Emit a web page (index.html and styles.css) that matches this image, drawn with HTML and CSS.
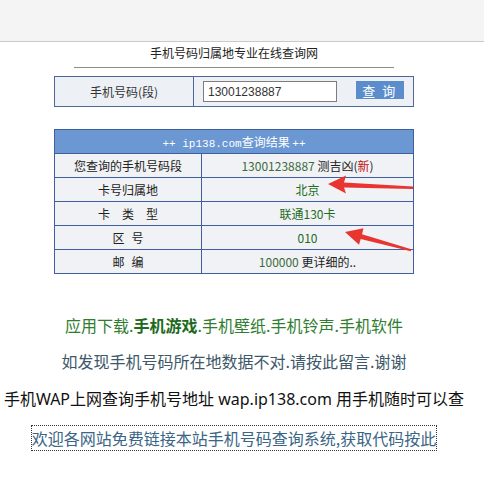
FILE: index.html
```html
<!DOCTYPE html>
<html lang="zh-CN">
<head>
    <meta charset="UTF-8">
    <title>手机号码归属地专业在线查询网</title>
    <link rel="stylesheet" href="styles.css">
</head>
<body>
    <div class="topbar"></div>
    <div class="page">
        <div class="site-title">手机号码归属地专业在线查询网</div>
        <hr class="title-rule">

        <table class="search-table">
            <tr>
                <td class="search-label">手机号码(段)</td>
                <td class="search-field">
                    <input class="search-input" type="text" value="13001238887">
                    <button class="search-btn">查 询</button>
                </td>
            </tr>
        </table>

        <table class="result-table">
            <tr><th colspan="2"><span class="mono">++ ip138.com</span>查询结果 <span class="mono">++</span></th></tr>
            <tr><td class="key">您查询的手机号码段</td><td class="val"><span class="num">13001238887</span> <span class="plain">测吉凶(<em>新</em>)</span></td></tr>
            <tr><td class="key">卡号归属地</td><td class="val">北京</td></tr>
            <tr><td class="key"><span class="wide">卡类型</span></td><td class="val">联通130卡</td></tr>
            <tr><td class="key"><span class="mid">区号</span></td><td class="val">010</td></tr>
            <tr><td class="key"><span class="mid">邮编</span></td><td class="val"><span class="num">100000</span> <span class="plain">更详细的..</span></td></tr>
        </table>

        <p class="links green">应用下载.<b>手机游戏</b>.手机壁纸.手机铃声.手机软件</p>
        <p class="links slate">如发现手机号码所在地数据不对.请按此留言.谢谢</p>
        <p class="links black">手机WAP上网查询手机号地址 wap.ip138.com 用手机随时可以查</p>
        <p class="links"><a class="code-link" href="#">欢迎各网站免费链接本站手机号码查询系统,获取代码按此</a></p>
    </div>

    <svg class="arrows" width="484" height="496" viewBox="0 0 484 496">
        <polygon points="328,184 346,175.5 344,182.5 413,186.5 413,189 344,187.5 346,193.5" fill="#e8352f"/>
        <polygon points="345,232 363.5,228.3 362,234.2 411.3,249.3 410.7,251.3 360.7,238.9 359,244.7" fill="#e8352f"/>
    </svg>
</body>
</html>
```

FILE: styles.css
```css
body {
    margin: 0;
    font-family: "Noto Sans CJK SC", sans-serif;
    background: white;
    position: relative;
    width: 484px;
    height: 496px;
    overflow: hidden;
}
.topbar { height: 41px; background: #f4f4f4; border-bottom: 1px solid #c9c9c9; }
.page { width: 468px; text-align: center; }
.site-title { font-size: 12px; line-height: 16px; margin-top: 3px; color: #222; }
.title-rule { width: 320px; margin: 6px auto 0; border: none; border-top: 1px solid #8c8c8c; height: 0; }

.search-table {
    margin: 8px auto 0; width: 360px; border-collapse: collapse;
    border: 1px solid #4d679d; background: #edf1f6;
}
.search-table td { padding: 0; height: 29px; font-size: 12px; color: #333; }
.search-label { width: 138px; border-right: 1px solid #4d679d; }
.search-field { text-align: left; }
.search-input {
    margin: 0 0 0 9px; width: 134px; height: 21px; box-sizing: border-box;
    border: 1px solid #7d7d7d; padding: 0 4px; font-size: 12px; color: #333;
    font-family: "Liberation Sans", sans-serif; vertical-align: middle;
}
.search-btn {
    margin: -4px 0 0 16px; width: 48px; height: 18px; border: none; padding: 0;
    background: #5b8ccb; color: white; font-size: 13px; letter-spacing: 2px;
    font-family: "Noto Sans CJK SC", sans-serif; vertical-align: middle;
}

.result-table {
    margin: 22px auto 0; width: 360px; border-collapse: collapse;
    border: 1px solid #3f5f9f; font-size: 12px;
}
.result-table th {
    height: 23px; padding: 0; background: #6b97d3; color: white; font-weight: normal;
    border: 1px solid #3f5f9f;
}
.result-table th .mono { font-family: "Liberation Mono", monospace; font-size: 11px; }
.result-table td { height: 23px; padding: 0; background: #f0f2f5; border: 1px solid #3f5f9f; }
.result-table .key { width: 146px; color: #222; }
.result-table .wide { letter-spacing: 12px; margin-right: -12px; }
.result-table .mid { letter-spacing: 7px; margin-right: -7px; }
.result-table .val { color: #1e6b1e; }
.result-table .num { color: #3c6b3c; }
.result-table .plain { color: #222; }
.result-table em { font-style: normal; color: #c01010; }

.links { margin: 0; font-size: 16px; line-height: 20px; }
.links.green { margin-top: 41px; color: #2f7d2f; }
.links.green b { color: #1d6a1d; }
.links.slate { margin-top: 16px; color: #3d5868; }
.links.black { margin-top: 18px; color: #111; font-family: "Noto Sans", "Noto Sans CJK SC", sans-serif; }
.links:last-child { margin-top: 17px; }
.code-link {
    display: inline-block; color: #3a6585; text-decoration: none;
    outline: 1px dotted #333; padding: 2px 0; line-height: 20px;
}
.arrows { position: absolute; top: 0; left: 0; pointer-events: none; }
```
